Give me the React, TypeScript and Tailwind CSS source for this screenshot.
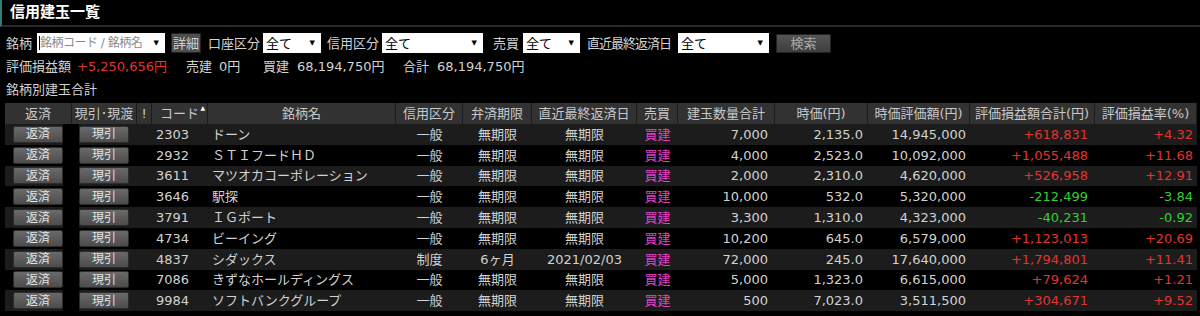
import React from 'react'

const COLS =
  'grid grid-cols-[67px_65px_15px_56px_188px_67px_69px_105px_41px_97px_93px_102px_125px_102px]'

type Row = {
  code: string
  name: string
  kind: string
  limit: string
  last: string
  qty: string
  price: string
  value: string
  pl: string
  rate: string
}

const rows: Row[] = [
  { code: '2303', name: 'ドーン', kind: '一般', limit: '無期限', last: '無期限', qty: '7,000', price: '2,135.0', value: '14,945,000', pl: '+618,831', rate: '+4.32' },
  { code: '2932', name: 'ＳＴＩフードＨＤ', kind: '一般', limit: '無期限', last: '無期限', qty: '4,000', price: '2,523.0', value: '10,092,000', pl: '+1,055,488', rate: '+11.68' },
  { code: '3611', name: 'マツオカコーポレーション', kind: '一般', limit: '無期限', last: '無期限', qty: '2,000', price: '2,310.0', value: '4,620,000', pl: '+526,958', rate: '+12.91' },
  { code: '3646', name: '駅探', kind: '一般', limit: '無期限', last: '無期限', qty: '10,000', price: '532.0', value: '5,320,000', pl: '-212,499', rate: '-3.84' },
  { code: '3791', name: 'ＩＧポート', kind: '一般', limit: '無期限', last: '無期限', qty: '3,300', price: '1,310.0', value: '4,323,000', pl: '-40,231', rate: '-0.92' },
  { code: '4734', name: 'ビーイング', kind: '一般', limit: '無期限', last: '無期限', qty: '10,200', price: '645.0', value: '6,579,000', pl: '+1,123,013', rate: '+20.69' },
  { code: '4837', name: 'シダックス', kind: '制度', limit: '6ヶ月', last: '2021/02/03', qty: '72,000', price: '245.0', value: '17,640,000', pl: '+1,794,801', rate: '+11.41' },
  { code: '7086', name: 'きずなホールディングス', kind: '一般', limit: '無期限', last: '無期限', qty: '5,000', price: '1,323.0', value: '6,615,000', pl: '+79,624', rate: '+1.21' },
  { code: '9984', name: 'ソフトバンクグループ', kind: '一般', limit: '無期限', last: '無期限', qty: '500', price: '7,023.0', value: '3,511,500', pl: '+304,671', rate: '+9.52' },
]

const headers = [
  '返済',
  '現引･現渡',
  '!',
  'コード',
  '銘柄名',
  '信用区分',
  '弁済期限',
  '直近最終返済日',
  '売買',
  '建玉数量合計',
  '時価(円)',
  '時価評価額(円)',
  '評価損益額合計(円)',
  '評価損益率(%)',
]

function Select({ w, label }: { w: string; label: string }) {
  return (
    <div className={`${w} flex h-[20px] shrink-0 items-center justify-between bg-white pl-[3px] pr-[6px] text-black`}>
      <span>{label}</span>
      <span className="text-[7px] leading-none">▼</span>
    </div>
  )
}

function RowButton({ label }: { label: string }) {
  return (
    <div className="flex h-[17px] w-[50px] shrink-0 items-center justify-center rounded-[2px] border border-[#2c2c2c] bg-gradient-to-b from-[#6a6a6a] to-[#4c4c4c] text-[12px] text-[#e4e4e4]">
      {label}
    </div>
  )
}

export default function App() {
  return (
    <div className="h-[316px] w-[1200px] overflow-hidden bg-black font-['DejaVu_Sans','Noto_Sans_CJK_JP',sans-serif] text-[13px] leading-none text-[#d2d2d2]">
      {/* title */}
      <div className="flex h-[27px] items-center border-b-2 border-[#2a2a2a] border-l-2 border-l-[#3a7a74] pl-[8px]">
        <span className="text-[15px] font-bold text-white">信用建玉一覧</span>
      </div>

      {/* filters */}
      <div className="mt-[6px] flex h-[20px] items-center whitespace-nowrap pl-[6px]">
        <span className="w-[31px] shrink-0">銘柄</span>
        <div className="relative flex h-[20px] w-[128px] shrink-0 items-center justify-between bg-white pl-[3px] pr-[6px] text-[12px] text-[#8a8a8a]">
          <span className="absolute left-[2px] top-[3px] h-[14px] w-px bg-black" />
          <span className="tracking-[-0.5px]">銘柄コード / 銘柄名</span>
          <span className="text-[7px] leading-none text-black">▼</span>
        </div>
        <div className="ml-[6px] flex h-[20px] w-[30px] shrink-0 items-center justify-center border border-[#222] bg-[#4e4e4e] text-[#d0d0d0]">
          詳細
        </div>
        <span className="ml-[7px] w-[55px] shrink-0">口座区分</span>
        <Select w="w-[58px]" label="全て" />
        <span className="ml-[6px] w-[55px] shrink-0">信用区分</span>
        <Select w="w-[101px]" label="全て" />
        <span className="ml-[10px] w-[30px] shrink-0">売買</span>
        <Select w="w-[57px]" label="全て" />
        <span className="ml-[7px] w-[91px] shrink-0 tracking-[-1px]">直近最終返済日</span>
        <Select w="w-[91px]" label="全て" />
        <div className="ml-[7px] flex h-[19px] w-[55px] shrink-0 items-center justify-center border border-[#222] bg-gradient-to-b from-[#555] to-[#3e3e3e] text-[#a8a8a8]">
          検索
        </div>
      </div>

      {/* summary */}
      <div className="mt-[5px] flex h-[16px] items-center whitespace-nowrap pl-[6px]">
        <span className="w-[71px]">評価損益額</span>
        <span className="w-[109px] text-[#e0352f]">+5,250,656円</span>
        <span className="w-[33px]">売建</span>
        <span className="w-[44px]">0円</span>
        <span className="w-[34px]">買建</span>
        <span className="w-[106px]">68,194,750円</span>
        <span className="w-[34px]">合計</span>
        <span>68,194,750円</span>
      </div>

      <div className="mt-[7px] flex h-[16px] items-center pl-[6px]">銘柄別建玉合計</div>

      {/* table */}
      <div className="ml-[5px] mt-[6px] w-[1192px]">
        <div className={`${COLS} h-[21px] bg-[#323232] text-[#c8c8c8]`}>
          {headers.map((h, i) => (
            <div key={h} className="relative flex items-center justify-center whitespace-nowrap border-r border-[#1c1c1c]">
              {h}
              {i === 3 && (
                <span className="absolute right-[2px] top-[2px] text-[6px] text-white">▲</span>
              )}
            </div>
          ))}
        </div>
        {rows.map((r, idx) => {
          const bg = idx % 2 === 0 ? 'bg-[#1c1c1c]' : 'bg-black'
          const plColor = r.pl.startsWith('-') ? 'text-[#34cf34]' : 'text-[#e0352f]'
          return (
            <div key={r.code} className={`${COLS} h-[20.8px] whitespace-nowrap ${bg}`}>
              <div className="flex items-center pl-[8px]">
                <RowButton label="返済" />
                <div className="h-full flex-1 bg-black" />
              </div>
              <div className="flex items-center">
                <div className="h-full w-[7px] bg-black" />
                <RowButton label="現引" />
              </div>
              <div />
              <div className="flex items-center pl-[4px]">{r.code}</div>
              <div className="flex items-center overflow-hidden pl-[4px]">{r.name}</div>
              <div className="flex items-center justify-center">{r.kind}</div>
              <div className="flex items-center justify-center">{r.limit}</div>
              <div className="flex items-center justify-center">{r.last}</div>
              <div className="flex items-center justify-center text-[#e23fc2]">買建</div>
              <div className="flex items-center justify-end pr-[7px]">{r.qty}</div>
              <div className="flex items-center justify-end pr-[5px]">{r.price}</div>
              <div className="flex items-center justify-end pr-[4px]">{r.value}</div>
              <div className={`flex items-center justify-end pr-[7px] ${plColor}`}>{r.pl}</div>
              <div className={`flex items-center justify-end pr-[4px] ${plColor}`}>{r.rate}</div>
            </div>
          )
        })}
      </div>
    </div>
  )
}
